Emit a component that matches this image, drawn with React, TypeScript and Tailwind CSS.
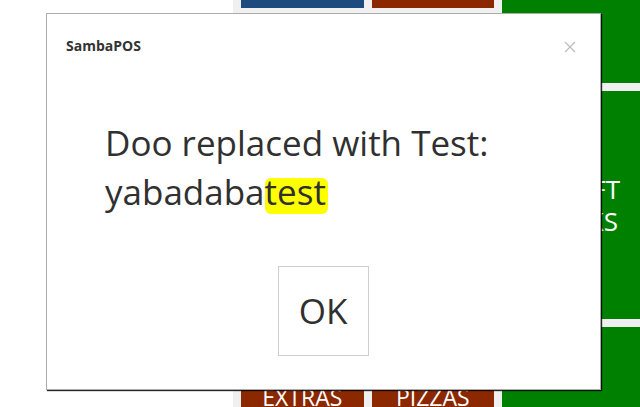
import React from "react";

export default function App() {
  return (
    <div className="relative h-[407px] w-[640px] overflow-hidden bg-white" style={{ fontFamily: '"Open Sans", "Noto Sans", sans-serif' }}>
      {/* background page */}
      <div className="flex h-full w-full">
        <div className="w-[233px] bg-white" />
        <div className="flex w-[269px] flex-col justify-between bg-[#f0f0f0] px-[8px]">
          <div className="flex h-[8px] gap-[8px]">
            <div className="flex-1 bg-[#1f4a7e]" />
            <div className="flex-1 bg-[#8b2800]" />
          </div>
          <div className="flex h-[60px] gap-[8px]">
            <div className="flex flex-1 justify-center bg-[#8b2800] pt-[39px] text-[23px] leading-none text-white">EXTRAS</div>
            <div className="flex flex-1 justify-center bg-[#8b2800] pt-[39px] text-[23px] leading-none text-white">PIZZAS</div>
          </div>
        </div>
        <div className="flex flex-1 flex-col gap-[8px] bg-[#f0f0f0]">
          <div className="h-[83px] bg-[#008000]" />
          <div className="flex h-[228px] flex-col items-end justify-center bg-[#008000] text-[26px] leading-[32px] text-white">
            <span className="mr-[20px]">CRAFT</span>
            <span className="mr-[22px]">DRINKS</span>
          </div>
          <div className="flex-1 bg-[#008000]" />
        </div>
      </div>

      {/* dialog */}
      <div className="absolute left-[46px] top-[13px] flex h-[377px] w-[555px] flex-col border border-[#acacac] bg-white shadow-[1px_1px_1px_rgba(0,0,0,0.85)]">
        <div className="flex h-[62px] items-center justify-between pl-[19px] pr-[24px]">
          <span className="text-[14px] font-bold text-[#333]">SambaPOS</span>
          <svg width="12" height="12" viewBox="0 0 12 12" className="mt-[3px]">
            <path d="M1 1L11 11M11 1L1 11" stroke="#bdbdbd" strokeWidth="1.3" />
          </svg>
        </div>
        <div className="pl-[58px] pt-[42px] text-[35px] leading-[49px] text-[#303030]">
          <div>Doo replaced with Test:</div>
          <div>
            yabadaba<span className="inline-block rounded-[6px] bg-[#ffff00] pb-[9px] pr-[2px] leading-[27px]">test</span>
          </div>
        </div>
        <div className="flex flex-1 items-start justify-center pt-[50px]">
          <button className="ml-[-1px] flex h-[90px] w-[91px] items-center justify-center border border-[#cfcfcf] bg-white text-[35px] text-[#303030]">
            OK
          </button>
        </div>
      </div>
    </div>
  );
}
